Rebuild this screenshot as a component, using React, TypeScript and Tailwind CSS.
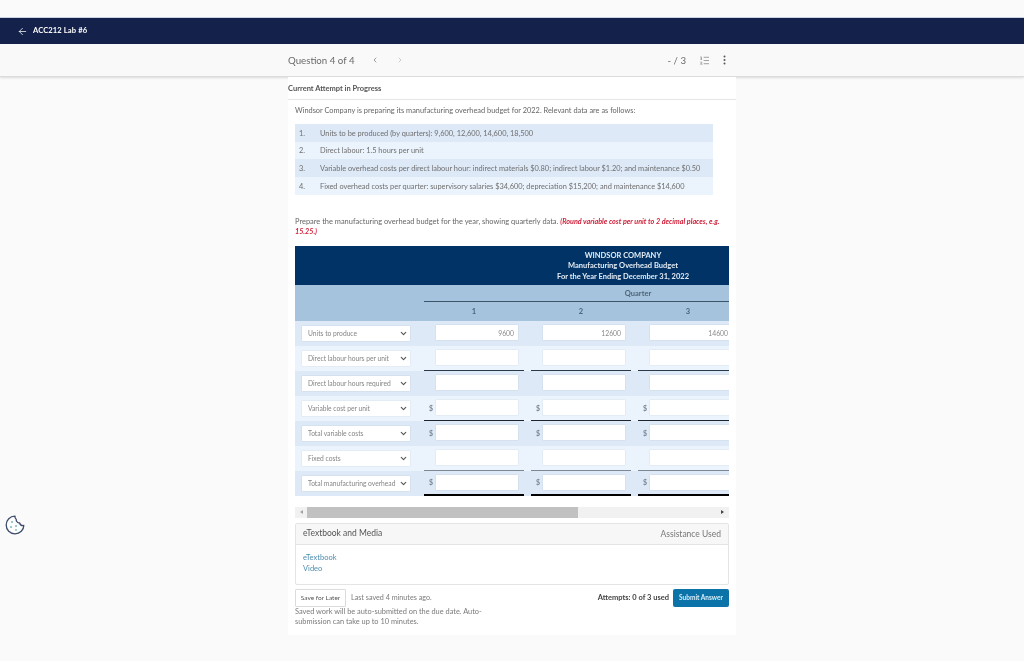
import { ArrowLeft, ChevronLeft, ChevronRight, ChevronDown, ListOrdered } from "lucide-react";

const facts = [
  ["1.", "Units to be produced (by quarters): 9,600, 12,600, 14,600, 18,500", "bg-[#dde9f7]"],
  ["2.", "Direct labour: 1.5 hours per unit", "bg-[#ebf3fc]"],
  ["3.", "Variable overhead costs per direct labour hour: indirect materials $0.80; indirect labour $1.20; and maintenance $0.50", "bg-[#dde9f7]"],
  ["4.", "Fixed overhead costs per quarter: supervisory salaries $34,600; depreciation $15,200; and maintenance $14,600", "bg-[#ebf3fc]"],
];

type Row = { label: string; dollar?: boolean; line: string; values?: string[] };

const rows: Row[] = [
  { label: "Units to produce", line: "border-transparent border-b", values: ["9600", "12600", "14600", "18500"] },
  { label: "Direct labour hours per unit", line: "border-[#2b3a4a] border-b" },
  { label: "Direct labour hours required", line: "border-transparent border-b" },
  { label: "Variable cost per unit", dollar: true, line: "border-[#1c2530] border-b" },
  { label: "Total variable costs", dollar: true, line: "border-transparent border-b" },
  { label: "Fixed costs", line: "border-[#7d8894] border-b" },
  { label: "Total manufacturing overhead", dollar: true, line: "border-black border-b-2" },
];

const cols = [0, 1, 2, 3];

export default function App() {
  return (
    <div className="relative h-[661px] w-[1024px] overflow-hidden bg-[#fafafa] font-['Lato',sans-serif] text-[#666] blur-[0.3px]">
      <div className="h-[18px] border-b border-[#c9d3e0]" />
      <header className="flex h-[26px] items-center gap-[5px] bg-[#14214a] pl-[17px] text-white">
        <ArrowLeft size={11} strokeWidth={1.6} />
        <span className="text-[7.6px] font-bold tracking-[0.1px]">ACC212 Lab #6</span>
      </header>
      <div className="h-[33px] border-b border-[#dcdcdc] bg-[#f9f9f9] shadow-[0_1px_2px_rgba(0,0,0,0.12)]">
        <div className="mx-auto flex h-full w-[448px] items-center">
          <span className="text-[9.7px] text-[#6a6a6a]">Question 4 of 4</span>
          <ChevronLeft size={8} strokeWidth={2.2} className="ml-[16px] text-[#777]" />
          <ChevronRight size={8} strokeWidth={2.2} className="ml-[17px] text-[#bbb]" />
          <span className="ml-auto text-[9.7px] text-[#6a6a6a]">- / 3</span>
          <ListOrdered size={11} strokeWidth={1.3} className="ml-[13px] text-[#666]" />
          <svg width="3" height="10" viewBox="0 0 3 10" className="ml-[13px] mr-[10px]">
            <circle cx="1.5" cy="1.5" r="1" fill="#555" />
            <circle cx="1.5" cy="5" r="1" fill="#555" />
            <circle cx="1.5" cy="8.5" r="1" fill="#555" />
          </svg>
        </div>
      </div>

      <main className="mx-auto h-[558px] w-[448px] bg-white">
        <div className="flex h-[23px] items-center border-b border-[#e6e6e6] pt-[2px] text-[7.5px] font-bold text-[#555]">
          Current Attempt in Progress
        </div>
        <div className="px-[7px]">
          <p className="pt-[5px] text-[7.4px] leading-[12px] text-[#666]">
            Windsor Company is preparing its manufacturing overhead budget for 2022. Relevant data are as follows:
          </p>
          <ol className="mt-[7px] w-[418px]">
            {facts.map(([n, t, bg]) => (
              <li key={n} className={`flex h-[17.7px] items-center pl-[4px] pt-[1px] text-[7.4px] text-[#6f6f6f] ${bg}`}>
                <span className="w-[21px]">{n}</span>
                <span>{t}</span>
              </li>
            ))}
          </ol>
          <p className="mt-[22px] text-[7.45px] leading-[10px] text-[#666]">
            Prepare the manufacturing overhead budget for the year, showing quarterly data.{" "}
            <span className="text-[7.2px] font-bold italic text-[#d0213a]">
              (Round variable cost per unit to 2 decimal places, e.g. 15.25.)
            </span>
          </p>

          <div className="mt-[9px] w-[434px] overflow-hidden">
            <div className="w-[656px]">
              <div className="flex h-[39px] flex-col items-center justify-center bg-[#013366] pt-[2px] text-[7.5px] font-bold leading-[10.5px] text-[#e4ecf5]">
                <div>WINDSOR COMPANY</div>
                <div>Manufacturing Overhead Budget</div>
                <div>For the Year Ending December 31, 2022</div>
              </div>
              <div className="flex h-[36px] bg-[#a5c3dd] text-[7.5px] font-bold text-[#4d6477]">
                <div className="w-[129px] shrink-0" />
                <div className="grow">
                  <div className="h-[17px] w-[428px] border-b border-[#3c5468] pt-[4px] text-center leading-[10px]">Quarter</div>
                  <div className="flex">
                    {cols.map((c) => (
                      <div key={c} className="mr-[7px] w-[100px] pt-[5px] text-center leading-[10px]">{c + 1}</div>
                    ))}
                  </div>
                </div>
              </div>
              {rows.map((r, i) => (
                <div key={r.label} className={`flex h-[25px] ${i % 2 === 0 ? "bg-[#dde9f7]" : "bg-[#ebf3fc]"}`}>
                  <div className="flex w-[129px] shrink-0 items-center pl-[7px]">
                    <div className="flex h-[15px] w-[108px] items-center justify-between whitespace-nowrap bg-white pl-[6px] pr-[2px] text-[6.7px] text-[#858585] shadow-[0_0_1px_rgba(0,0,0,0.2)]">
                      <span>{r.label}</span>
                      <ChevronDown size={9} strokeWidth={3} className="shrink-0 text-[#555]" />
                    </div>
                  </div>
                  {cols.map((c) => (
                    <div key={c} className={`mr-[7px] flex w-[100px] shrink-0 items-center ${r.line}`}>
                      <span className="w-[12px] pl-[5px] text-[7px] font-bold text-[#7b8794]">{r.dollar ? "$" : ""}</span>
                      <div className="flex h-[15px] w-[82px] items-center justify-end bg-white pr-[4px] text-[6.8px] text-[#8a8a8a] shadow-[0_0_1px_rgba(0,0,0,0.2)]">
                        {r.values ? r.values[c] : ""}
                      </div>
                    </div>
                  ))}
                </div>
              ))}
            </div>
          </div>

          <div className="mt-[11px] flex h-[11px] w-[434px] items-center bg-[#f1f1f1]">
            <div className="flex w-[12px] justify-center">
              <div className="h-0 w-0 border-y-[2.5px] border-r-[3px] border-y-transparent border-r-[#a3a3a3]" />
            </div>
            <div className="h-full w-[271px] bg-[#c1c1c1]" />
            <div className="ml-auto mr-[5px] h-0 w-0 border-y-[2.5px] border-l-[3px] border-y-transparent border-l-[#444]" />
          </div>

          <section className="mt-[5px] h-[62px] w-[434px] rounded-[2px] border border-[#e4e4e4]">
            <div className="flex h-[21px] items-center justify-between border-b border-[#e4e4e4] bg-[#f7f7f7] px-[7px] text-[8.5px] text-[#666]">
              <span className="text-[#555]">eTextbook and Media</span>
              <span className="pt-[1px] text-[#777]">Assistance Used</span>
            </div>
            <div className="pl-[7px] pt-[7px] text-[7.5px] leading-[11px] text-[#4f8db0]">
              <div>eTextbook</div>
              <div>Video</div>
            </div>
          </section>

          <div className="mt-[4px] flex w-[434px] justify-between">
            <div className="w-[200px]">
              <div className="flex items-center">
                <div className="flex h-[18px] w-[51px] items-center justify-center rounded-[1px] border border-[#dcdcdc] text-[6.5px] text-[#555]">Save for Later</div>
                <span className="ml-[5px] pt-[2px] text-[7.2px] text-[#7a7a7a]">Last saved 4 minutes ago.</span>
              </div>
              <p className="text-[7.4px] leading-[10.5px] text-[#7a7a7a]">
                Saved work will be auto-submitted on the due date. Auto-submission can take up to 10 minutes.
              </p>
            </div>
            <div className="flex h-[18px] items-center">
              <span className="text-[7.5px] font-bold text-[#444]">Attempts: 0 of 3 used</span>
              <div className="ml-[4px] flex h-[18px] w-[56px] items-center justify-center rounded-[2px] bg-[#0b73a8] text-[6.5px] font-bold text-[#d9eef9]">Submit Answer</div>
            </div>
          </div>
        </div>
      </main>

      <svg width="20" height="20" viewBox="0 0 20 20" className="absolute left-[5px] top-[515px]">
        <path d="M10 1.2 C5 1.2 1.2 5 1.2 10 C1.2 15 5 18.8 10 18.8 C15 18.8 18.8 15 18.8 10.5 C16.6 10.8 15 9.8 14.6 8 C12.6 8 11 6.4 11.2 4.2 C10.2 3.6 9.8 2.4 10 1.2 Z" fill="#fff" stroke="#3d4a6b" strokeWidth="1.3" strokeLinejoin="round" />
        <circle cx="7" cy="7" r="1.1" fill="#7fc4c0" />
        <circle cx="6" cy="12" r="1.1" fill="#7fc4c0" />
        <circle cx="11" cy="11" r="1.1" fill="#7fc4c0" />
        <circle cx="11" cy="15" r="1" fill="#7fc4c0" />
      </svg>
    </div>
  );
}
